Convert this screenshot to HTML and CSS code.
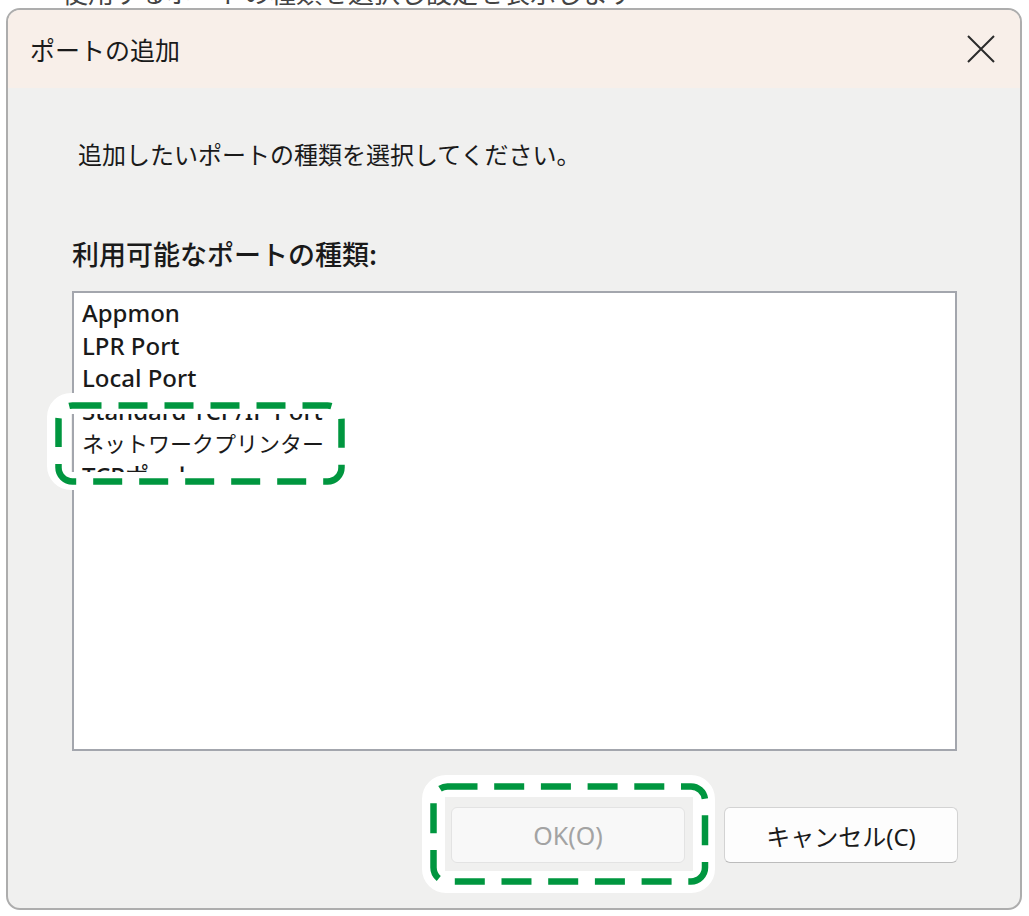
FILE: index.html
```html
<!DOCTYPE html>
<html lang="ja">
<head>
    <meta charset="UTF-8">
    <title>ポートの追加</title>
    <meta name="viewport" content="width=device-width, initial-scale=1.0">
    <link rel="stylesheet" href="styles.css">
</head>
<body>
    <div class="page">
        <div class="behind"><div class="behind-line">使用するポートの種類を選択し設定を表示します</div></div>

        <div class="dialog">
            <div class="titlebar">
                <div class="title">ポートの追加</div>
                <svg class="close" width="30" height="30" viewBox="0 0 30 30">
                    <path d="M2 2 L28 28 M28 2 L2 28" stroke="#2b2b2b" stroke-width="2" fill="none"/>
                </svg>
            </div>
            <div class="body">
                <div class="intro">追加したいポートの種類を選択してください。</div>
                <div class="list-label">利用可能なポートの種類:</div>
                <div class="port-list">
                    <div class="port">Appmon</div>
                    <div class="port">LPR Port</div>
                    <div class="port">Local Port</div>
                    <div class="port">Standard TCP/IP Port</div>
                    <div class="port jp">ネットワークプリンター</div>
                    <div class="port">TCPポート</div>
                </div>
                <div class="actions">
                    <button class="btn btn-disabled">OK(O)</button>
                    <button class="btn">キャンセル(C)</button>
                </div>
            </div>
        </div>

        <!-- annotation marks -->
        <svg class="mark mark-list" width="301" height="97" viewBox="0 0 301 97">
            <path fill="#fff" fill-rule="evenodd" d="M24 0 H277 A24 24 0 0 1 301 24 V73 A24 24 0 0 1 277 97 H24 A24 24 0 0 1 0 73 V24 A24 24 0 0 1 24 0 Z M24 21 V79 H290 V21 Z"/>
            <rect x="11.5" y="12.5" width="283" height="76" rx="14" fill="none" stroke="#00963f" stroke-width="6.5" stroke-dasharray="29 17"/>
        </svg>
        <svg class="mark mark-ok" width="293" height="118" viewBox="0 0 293 118">
            <path fill="#fff" fill-rule="evenodd" d="M24 0 H269 A24 24 0 0 1 293 24 V94 A24 24 0 0 1 269 118 H24 A24 24 0 0 1 0 94 V24 A24 24 0 0 1 24 0 Z M23 22 V96 H271 V22 Z"/>
            <rect x="11.5" y="11.5" width="271.5" height="95" rx="14" fill="none" stroke="#00963f" stroke-width="6.5" stroke-dasharray="30 16.7"/>
        </svg>
    </div>
</body>
</html>
```

FILE: styles.css
```css
body {
    margin: 0;
    padding: 0;
    background: #fff;
    font-family: "Noto Sans", "Noto Sans CJK JP", sans-serif;
    color: #1c1c1c;
}
.page {
    position: relative;
    width: 1029px;
    height: 916px;
    overflow: hidden;
    background: #fff;
}
.behind {
    height: 8px;
    overflow: hidden;
    padding-left: 62px;
}
.behind-line {
    margin-top: -21px;
    font-family: "Noto Sans CJK JP", sans-serif;
    font-size: 26px;
    line-height: 26px;
    color: #444;
}
.dialog {
    margin-left: 6px;
    width: 1016px;
    height: 902px;
    box-sizing: border-box;
    border: 2px solid #adadad;
    border-radius: 14px;
    overflow: hidden;
    background: #f0f0ef;
    display: flex;
    flex-direction: column;
}
.titlebar {
    height: 78px;
    flex: none;
    background: #f8efe9;
    display: flex;
    align-items: center;
    justify-content: space-between;
    padding: 0 24px 0 22px;
}
.title {
    font-family: "Noto Sans CJK JP", sans-serif;
    font-size: 25px;
    color: #1a1a1a;
}
.close {
    display: block;
}
.body {
    padding: 48px 62px 0 64px;
}
.intro {
    margin-left: 6px;
    font-family: "Noto Sans CJK JP", sans-serif;
    font-size: 24px;
    line-height: 36px;
    color: #1a1a1a;
}
.list-label {
    margin-top: 64px;
    font-family: "Noto Sans CJK JP", sans-serif;
    font-size: 27px;
    font-weight: 500;
    line-height: 36px;
    color: #1a1a1a;
}
.port-list {
    margin-top: 19px;
    width: 885px;
    height: 460px;
    box-sizing: border-box;
    border: 2px solid #a3a6ad;
    background: #fff;
    padding: 4px 0 0 8px;
    overflow: hidden;
}
.port {
    font-size: 24px;
    font-weight: 500;
    line-height: 32.5px;
    white-space: nowrap;
    color: #1a1a1a;
}
.port.jp {
    font-size: 22px;
    font-weight: 400;
}
.actions {
    margin-top: 56px;
    width: 886px;
    display: flex;
    justify-content: flex-end;
    gap: 39px;
}
.btn {
    width: 234px;
    height: 56px;
    border: 1px solid #d3d3d3;
    border-bottom-color: #bcbcbc;
    border-radius: 6px;
    background: #fdfdfd;
    font-family: "Noto Sans", "Noto Sans CJK JP", sans-serif;
    font-size: 24px;
    color: #1a1a1a;
    padding: 0;
}
.btn-disabled {
    background: #f8f8f8;
    border-color: #e3e3e3;
    color: #a3a3a3;
    font-size: 25px;
}
.mark {
    position: absolute;
    display: block;
}
.mark-list {
    left: 47px;
    top: 393px;
}
.mark-ok {
    left: 422px;
    top: 775px;
}
```
